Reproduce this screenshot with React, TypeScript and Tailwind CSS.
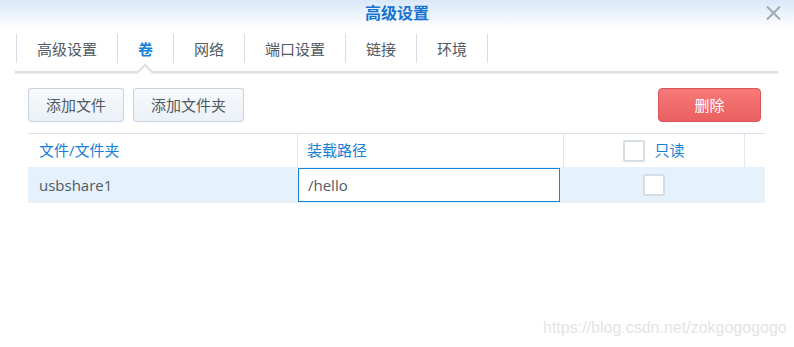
import React from "react";

const FONT = {
  fontFamily: '"Open Sans", "Noto Sans CJK SC", "Noto Sans", sans-serif',
};

const tabs = ["高级设置", "卷", "网络", "端口设置", "链接", "环境"];

function Checkbox() {
  return (
    <div className="w-[22px] h-[22px] bg-white border-2 border-[#d6dde5] rounded-[2px]" />
  );
}

export default function App() {
  return (
    <div
      className="relative w-[794px] h-[347px] bg-white overflow-hidden text-[#505a64]"
      style={FONT}
    >
      {/* Title bar */}
      <div className="h-[28px] flex justify-center items-start pt-[3px] bg-gradient-to-b from-[#d9e8f9] to-white">
        <span className="text-[16px] leading-[20px] font-bold text-[#1574d2]">高级设置</span>
      </div>
      <svg
        className="absolute left-[766px] top-[6px]"
        width="15"
        height="14"
        viewBox="0 0 15 14"
      >
        <path d="M1 0.5 L14 13.5 M14 0.5 L1 13.5" stroke="#a0a8b0" strokeWidth="2" />
      </svg>

      {/* Tabs */}
      <div className="relative ml-[15px] w-[763px] mt-[6px]">
        <div className="flex h-[29px] pl-[1px]">
          {tabs.map((t, i) => (
            <div
              key={t}
              className={
                "flex items-center px-[20px] border-l border-[#d5dde6] text-[15px] leading-[20px] " +
                (i === tabs.length - 1 ? "border-r " : "") +
                (i === 1 ? "text-[#1580d8] font-bold" : "text-[#505a64]")
              }
            >
              {t}
            </div>
          ))}
        </div>
        <div className="mt-[8px] h-[2px] bg-[#dcdfe3] shadow-[0_1px_2px_rgba(0,0,0,0.10)]" />
        <div className="absolute left-[124px] top-[32px] w-[12px] h-[12px] rotate-45 bg-white border-l-2 border-t-2 border-[#dcdfe3]" />
      </div>

      {/* Toolbar */}
      <div className="ml-[28px] w-[733px] mt-[15px] flex items-center">
        <button className="w-[96px] h-[34px] rounded-[3px] border border-[#c9d3dd] bg-gradient-to-b from-[#f7f9fc] to-[#ebf1f7] text-[15px] text-[#505a64]">
          添加文件
        </button>
        <button className="ml-[9px] w-[111px] h-[34px] rounded-[3px] border border-[#c9d3dd] bg-gradient-to-b from-[#f7f9fc] to-[#ebf1f7] text-[15px] text-[#505a64]">
          添加文件夹
        </button>
        <div className="flex-1" />
        <button className="w-[103px] h-[34px] rounded-[4px] border border-[#d9545a] bg-gradient-to-b from-[#f87a79] to-[#e95f5f] text-[15px] text-white">
          删除
        </button>
      </div>

      {/* Table */}
      <div className="ml-[28px] w-[737px] mt-[11px] border-t border-[#d8e2ec]">
        <div className="flex h-[33px] text-[15px] text-[#1681d6]">
          <div className="w-[269px] pl-[11px] flex items-center">文件/文件夹</div>
          <div className="w-[266px] pl-[9px] flex items-center border-l border-[#e0e7ee]">
            装载路径
          </div>
          <div className="w-[181px] flex items-center justify-center gap-[9px] border-l border-[#e0e7ee]">
            <Checkbox />
            <span>只读</span>
          </div>
          <div className="flex-1 border-l border-[#e0e7ee]" />
        </div>
        <div className="flex h-[36px] items-center bg-[#e5f2fc] text-[15px]">
          <div className="w-[269px] pl-[11px] text-[#505a64]">usbshare1</div>
          <div className="w-[266px] h-full flex items-center">
            <div className="ml-[1px] w-[262px] h-[34px] bg-white border border-[#1a84d6] pl-[9px] flex items-center text-[#505a64]">
              /hello
            </div>
          </div>
          <div className="w-[181px] flex items-center justify-center">
            <Checkbox />
          </div>
        </div>
      </div>

      {/* Watermark */}
      <div
        className="absolute left-[543px] top-[319px] text-[16px] leading-[18px] text-[#e4e4e4]"
        style={{ fontFamily: '"Liberation Sans", Arial, sans-serif' }}
      >
        https://blog.csdn.net/zokgogogogo
      </div>
    </div>
  );
}
